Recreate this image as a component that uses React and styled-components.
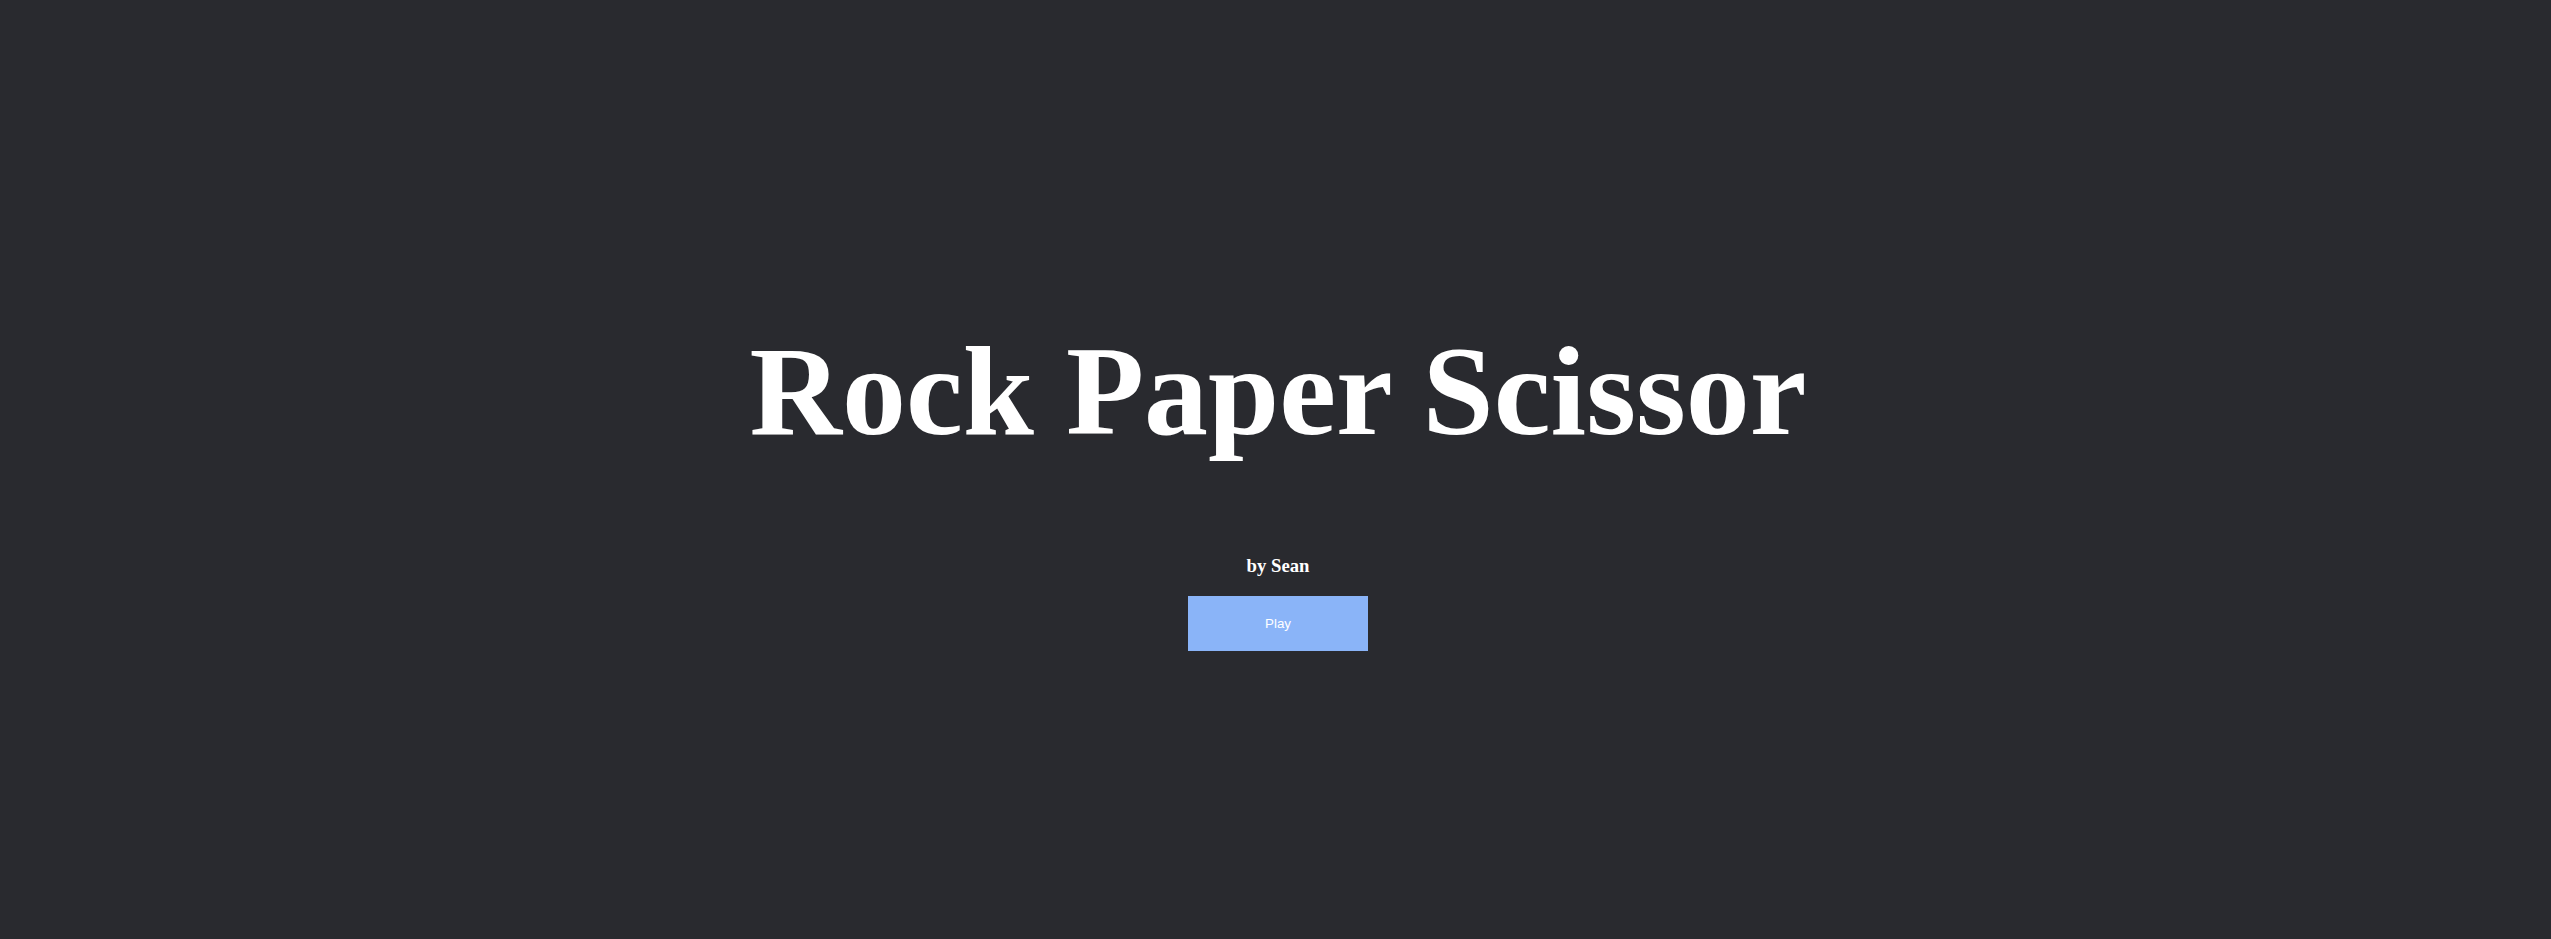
import React from 'react'
import styled, { createGlobalStyle } from 'styled-components'

const GlobalStyle = createGlobalStyle`
  html, body {
    margin: 0;
    padding: 0;
    background-color: #292a2f;
  }
  body {
    font-family: "Liberation Serif", "Times New Roman", serif;
    color: #fff;
  }
`

const Screen = styled.main`
  min-height: 100vh;
  box-sizing: border-box;
  display: flex;
  flex-direction: column;
  align-items: center;
  padding: 318px 0 0 5px;
`

const Title = styled.h1`
  margin: 0;
  font-size: 128px;
  font-weight: bold;
  line-height: normal;
  color: #fff;
`

const Byline = styled.h3`
  margin: 90px 0 19px;
  font-size: 18.72px;
  font-weight: bold;
  line-height: normal;
`

const PlayButton = styled.button`
  width: 180px;
  height: 55px;
  border: none;
  background-color: #8ab4f8;
  color: #fff;
  font-family: "Liberation Sans", Arial, sans-serif;
  font-size: 13.333px;
  cursor: pointer;
  &:hover {
    background-color: #7aa7f2;
  }
`

const App = () => {
  return (
    <>
      <GlobalStyle />
      <Screen>
        <Title>Rock Paper Scissor</Title>
        <Byline>by Sean</Byline>
        <PlayButton>Play</PlayButton>
      </Screen>
    </>
  )
}

export default App
